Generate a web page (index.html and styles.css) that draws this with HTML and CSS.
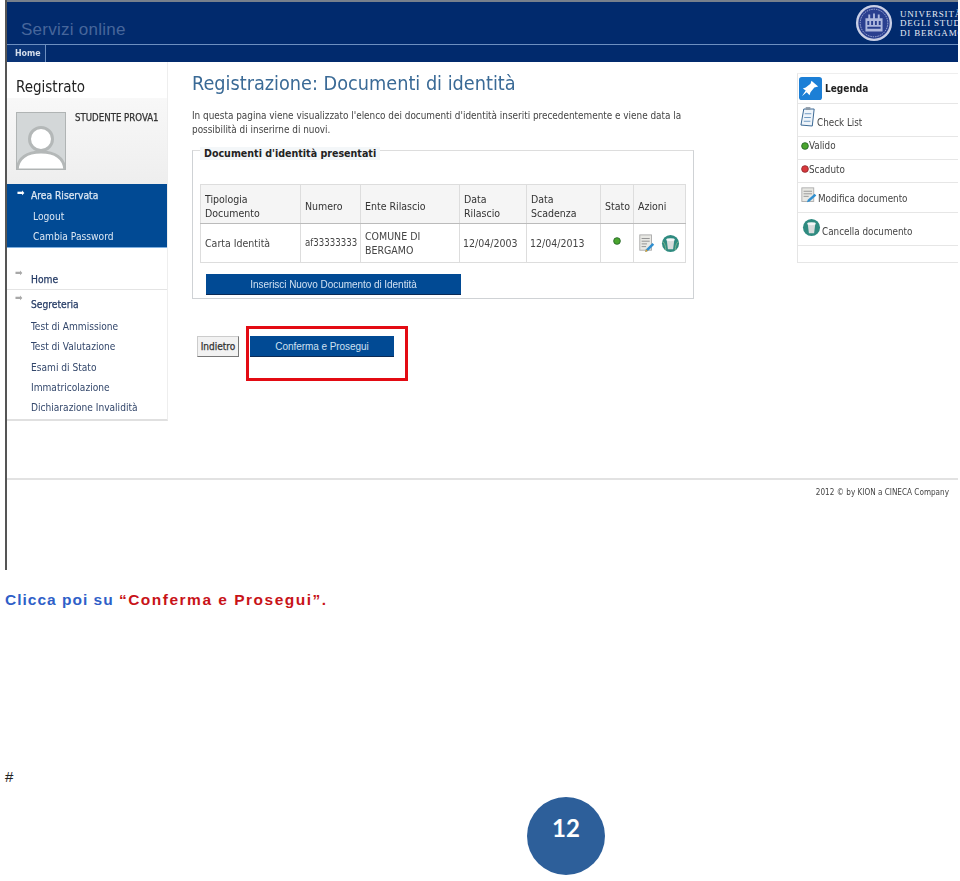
FILE: index.html
```html
<!DOCTYPE html>
<html lang="it">
<head>
<meta charset="utf-8">
<title>Registrazione: Documenti di identità</title>
<link rel="stylesheet" href="styles.css">
</head>
<body>
<div class="shot">
  <header class="head">
    <div class="brand-row">
      <div class="brand">Servizi online</div>
      <div class="uni">
        <svg class="seal" viewBox="0 0 40 40" width="38" height="38">
          <circle cx="20" cy="20" r="19" fill="#c9cfe6"/>
          <circle cx="20" cy="20" r="16.500" fill="#2a3f8f"/>
          <circle cx="20" cy="20" r="14.500" fill="none" stroke="#aab4dc" stroke-width="1" stroke-dasharray="1.500 1"/>
          <path d="M11 29V15h3v-4h2v4h3v-5h2v5h3v-4h2v4h3v14z" fill="#aeb8de"/>
          <path d="M13 18h2v4h-2zM17 18h2v4h-2zM21 18h2v4h-2zM25 18h2v4h-2zM13 24h14v2H13z" fill="#2a3f8f"/>
        </svg>
        <div class="uni-name">UNIVERSITÀ<br>DEGLI STUDI<br>DI BERGAMO</div>
      </div>
    </div>
    <nav class="topnav"><span class="topnav-item">Home</span></nav>
  </header>

  <div class="columns">
    <aside class="side">
      <h2 class="side-title">Registrato</h2>
      <div class="profile">
        <svg class="avatar" viewBox="0 0 50 58" width="50" height="58">
          <rect width="50" height="58" fill="#d3d7d8"/>
          <circle cx="25" cy="27" r="11.500" fill="#fff" stroke="#b4b8b8" stroke-width="3"/>
          <path d="M1 58c1-12 10-18 24-18s23 6 24 18z" fill="#fff" stroke="#b4b8b8" stroke-width="3"/>
          <rect x=".5" y=".5" width="49" height="57" fill="none" stroke="#b0b4b4"/>
        </svg>
        <div class="profile-name">STUDENTE PROVA1</div>
      </div>
      <ul class="menu-blue">
        <li class="menu-head"><span class="arrow">➡</span>Area Riservata</li>
        <li>Logout</li>
        <li>Cambia Password</li>
      </ul>
      <div class="menu-white">
        <div class="menu-group group-home"><span class="arrow">➡</span>Home</div>
        <div class="menu-group group-seg"><span class="arrow">➡</span>Segreteria</div>
        <ul class="sublist">
          <li>Test di Ammissione</li>
          <li>Test di Valutazione</li>
          <li>Esami di Stato</li>
          <li>Immatricolazione</li>
          <li>Dichiarazione Invalidità</li>
        </ul>
      </div>
    </aside>

    <main class="content">
      <h1 class="title">Registrazione: Documenti di identità</h1>
      <p class="intro">In questa pagina viene visualizzato l'elenco dei documenti d'identità inseriti precedentemente e viene data la<br>possibilità di inserirne di nuovi.</p>
      <section class="box">
        <h3 class="box-title">Documenti d'identità presentati</h3>
        <table class="docs">
          <colgroup>
            <col class="c1"><col class="c2"><col class="c3"><col class="c4"><col class="c5"><col class="c6"><col class="c7">
          </colgroup>
          <thead>
            <tr><th>Tipologia<br>Documento</th><th>Numero</th><th>Ente Rilascio</th><th>Data<br>Rilascio</th><th>Data<br>Scadenza</th><th>Stato</th><th>Azioni</th></tr>
          </thead>
          <tbody>
            <tr>
              <td>Carta Identità</td><td class="code">af33333333</td><td>COMUNE DI<br>BERGAMO</td><td class="date">12/04/2003</td><td class="date">12/04/2013</td>
              <td class="center"><svg class="dot" viewBox="0 0 10 10" width="8" height="8"><circle cx="5" cy="5" r="4.200" fill="#4aa52e" stroke="#1f5f25"/></svg></td>
              <td class="actions">
                <svg viewBox="0 0 20 20" width="18" height="18"><rect x="2" y="1" width="13" height="17" fill="#e8e8e4" stroke="#a9a9a9"/><path d="M4 5h9M4 8h9M4 11h6M4 14h5" stroke="#8b8b8b"/><path d="M9 17l7-7 2 2-7 7-3 1z" fill="#2f8fd0"/><path d="M8 20l1-3 2 2z" fill="#e8a020"/></svg>
                <svg viewBox="0 0 20 20" width="19" height="19"><circle cx="10" cy="10" r="9" fill="#2f8b80"/><path d="M6 6h8l-1.300 10H7.300z" fill="#d8dcdc"/><ellipse cx="10" cy="6" rx="4.500" ry="1.500" fill="#f4f6f6"/><path d="M2 8c2 2 3 5 3 9M18 8c-2 2-3 5-3 9" stroke="#7fb48a" fill="none"/></svg>
              </td>
            </tr>
          </tbody>
        </table>
        <button class="btn btn-insert" type="button">Inserisci Nuovo Documento di Identità</button>
      </section>
      <div class="actions-row">
        <button class="btn-back" type="button">Indietro</button>
        <button class="btn btn-confirm" type="button">Conferma e Prosegui</button>
        <div class="highlight"></div>
      </div>
    </main>

    <aside class="legend">
      <div class="leg-row leg-head">
        <svg viewBox="0 0 24 24" width="23" height="23"><rect width="24" height="24" rx="3" fill="#1c7fd6"/><path d="M13 4l7 6-4 1-4 5-1 3-3-3-5 4 4-6-3-2 3-1 5-4z" fill="#fff"/></svg>
        <span>Legenda</span>
      </div>
      <div class="leg-row leg-check">
        <svg viewBox="0 0 18 22" width="17" height="21"><path d="M4 2h11l-2 18-12-1z" fill="#eef4fa" stroke="#31618e"/><rect x="6" y="0" width="5" height="3" fill="#8c9aa8"/><path d="M5 7h7M4.500 11h7M4 15h7" stroke="#6a96bf"/></svg>
        <span>Check List</span>
      </div>
      <div class="leg-row leg-status leg-valid">
        <svg viewBox="0 0 10 10" width="8" height="8"><circle cx="5" cy="5" r="4.200" fill="#4aa52e" stroke="#1f5f25"/></svg><span>Valido</span>
      </div>
      <div class="leg-row leg-status leg-expired">
        <svg viewBox="0 0 10 10" width="8" height="8"><circle cx="5" cy="5" r="4.200" fill="#d8383c" stroke="#8a2428"/></svg><span>Scaduto</span>
      </div>
      <div class="leg-row leg-edit">
        <svg viewBox="0 0 20 20" width="17" height="17"><rect x="1" y="1" width="14" height="16" fill="#e8e8e4" stroke="#a9a9a9"/><path d="M3 5h10M3 8h10M3 11h6" stroke="#8b8b8b"/><path d="M8 15l8-7 2 2-8 7-3 1z" fill="#2f8fd0"/></svg>
        <span>Modifica documento</span>
      </div>
      <div class="leg-row leg-trash">
        <svg viewBox="0 0 20 20" width="19" height="19"><circle cx="10" cy="10" r="9" fill="#2f8b80"/><path d="M6 6h8l-1.300 10H7.300z" fill="#d8dcdc"/><ellipse cx="10" cy="6" rx="4.500" ry="1.500" fill="#f4f6f6"/></svg>
        <span>Cancella documento</span>
      </div>
      <div class="leg-row leg-empty"></div>
    </aside>
  </div>

  <footer class="foot">2012 © by KION a CINECA Company</footer>
</div>

<p class="caption"><span class="cap-blue">Clicca poi su </span><span class="cap-red">“Conferma e Prosegui”.</span></p>
<div class="hash">#</div>
<div class="page-no"><span>12</span></div>
</body>
</html>
```

FILE: styles.css
```css
* { box-sizing: border-box; }
html, body { margin: 0; padding: 0; }
body {
  width: 960px;
  height: 881px;
  overflow: hidden;
  background: #fff;
  font-family: "DejaVu Sans Condensed", "DejaVu Sans", sans-serif;
  font-stretch: condensed;
  color: #333;
}
ul { list-style: none; margin: 0; padding: 0; }
h1, h2, h3, p { margin: 0; font-weight: normal; }

.shot {
  margin-left: 5px;
  width: 953px;
  height: 570px;
  border-left: 2px solid #555;
  overflow: hidden;
  filter: blur(.3px);
}

/* header */
.head { border-top: 2px solid #77808c; background: #012a6d; }
.brand-row {
  height: 43px;
  display: flex;
  justify-content: space-between;
  align-items: center;
  border-bottom: 1px solid #6d8fc0;
  padding-left: 14px;
}
.brand {
  font: 17px "Liberation Sans", sans-serif;
  letter-spacing: .25px;
  color: #47669b;
  padding-top: 13px;
}
.uni { display: flex; align-items: center; gap: 7px; width: 103px; overflow: hidden; flex: none; white-space: nowrap; }
.seal { flex: none; }
.uni-name {
  font: 9px/9.500px "Liberation Serif", serif;
  letter-spacing: .8px;
  color: #e8ecf5;
  padding-top: 2px;
}
.topnav { height: 17px; display: flex; }
.topnav-item {
  width: 39px;
  font-size: 8.800px;
  font-weight: bold;
  line-height: 17px;
  padding-left: 8px;
  color: #d5deec;
  background: #0a3477;
  border-right: 1px solid #6d8fc0;
}

/* columns */
.columns { display: flex; height: 416px; align-items: flex-start; }

.side {
  width: 161px;
  flex: none;
  border-right: 1px solid #eee;
  border-bottom: 2px solid #e0e0e0;
}
.side-title { font-size: 15px; color: #222; height: 36px; padding: 16px 0 0 9px; line-height: 18px; }
.profile {
  height: 86px;
  background: linear-gradient(#f8f8f8, #eeeeee);
  padding: 14px 0 0 9px;
  display: flex;
  gap: 9px;
}
.avatar { flex: none; }
.profile-name { font-size: 9.600px; -webkit-text-stroke: .25px #333; color: #333; line-height: 12px; white-space: nowrap; }
.menu-blue {
  background: #014a94;
  color: #dce7f3;
  height: 64px;
  font-size: 10.200px;
  border-bottom: 1px solid #7fb0e0;
  padding: 2px 0 0 26px;
}
.menu-blue li { height: 20.700px; line-height: 20px; }
.menu-head { -webkit-text-stroke: .25px #dce7f3; position: relative; margin-left: -2px; }
.arrow { position: absolute; font-size: 10px; line-height: 10px; -webkit-text-stroke: 0; }
.menu-head .arrow { left: -14px; top: 2px; color: #fff; }
.menu-white { background: #fff; color: #33476b; }
.menu-group { position: relative; font-size: 10.200px; -webkit-text-stroke: .25px #263c66; padding-left: 24px; color: #263c66; }
.menu-group .arrow { left: 8px; color: #a8a8a8; top: 0; }
.group-home { height: 42px; padding-top: 24px; line-height: 16px; border-bottom: 1px solid #e4e4e4; }
.group-home .arrow { top: 20px; }
.group-seg { height: 24px; padding-top: 7px; line-height: 16px; }
.group-seg .arrow { top: 3px; }
.sublist { font-size: 10.100px; padding: 3px 0 1px 24px; }
.sublist li { height: 20.300px; line-height: 20px; white-space: nowrap; }

/* content */
.content { width: 502px; margin-left: 24px; flex: none; position: relative; }
.title { font-size: 19.700px; line-height: 24px; color: #3a6a96; padding-top: 10px; height: 42px; white-space: nowrap; }
.intro { font-size: 9.900px; line-height: 14px; color: #444; margin-top: 5px; white-space: nowrap; }
.box {
  margin-top: 13px;
  height: 149px;
  border: 1px solid #cfd2d5;
  border-top-color: #ddd;
  padding: 33px 7px 0;
  position: relative;
}
.box-title {
  position: absolute;
  left: 7px;
  top: -4px;
  padding: 0 4px;
  background: #f4f7f9;
  font-size: 10.600px;
  font-weight: bold;
  line-height: 13px;
  color: #222;
  white-space: nowrap;
}
.docs {
  table-layout: fixed;
  border-collapse: collapse;
  width: 485px;
  font-size: 10.500px;
  color: #444;
  border: 1px solid #9b9b9b;
  margin-bottom: 11px;
}
.c1 { width: 100px; } .c2 { width: 60px; } .c3 { width: 99px; } .c4 { width: 67px; }
.c5 { width: 74px; } .c6 { width: 33px; } .c7 { width: 52px; }
.docs th, .docs td {
  border: 1px solid #ddd;
  text-align: left;
  padding: 0 4px;
  line-height: 14px;
  font-weight: normal;
  white-space: nowrap;
}
.docs th { height: 39px; padding-top: 4px; background: #f5f5f5; color: #333; border-bottom-color: #bbb; }
.docs td { height: 39px; }
.docs .code { font-size: 9.600px; }
.docs .date { padding-left: 3px; }
.docs .center { text-align: center; }
.docs .dot { vertical-align: 2px; }
.docs .actions { padding-left: 4px; }
.docs .actions svg { vertical-align: middle; margin-right: 2px; }
.btn {
  display: block;
  font: 10px "Liberation Sans", sans-serif;
  letter-spacing: -.05px;
  color: #cfe0f2;
  background: #014a94;
  border: 0;
  border-bottom: 1px solid #0b2a55;
  padding: 0;
  height: 21px;
}
.btn-insert { width: 255px; margin-left: 6px; }

.actions-row { position: relative; display: flex; gap: 11px; margin: 37px 0 0 5px; align-items: flex-start; }
.btn-back {
  width: 42px;
  height: 21px;
  padding: 0;
  background: #f2f2f2;
  border: 1px solid #ccc;
  border-right-color: #777;
  border-bottom-color: #777;
  font-family: "DejaVu Sans Condensed", "DejaVu Sans", sans-serif;
  font-stretch: condensed;
  font-size: 10px;
  -webkit-text-stroke: .25px #333;
  color: #333;
}
.btn-confirm { width: 144px; }
.highlight {
  position: absolute;
  left: 49px;
  top: -10px;
  width: 162px;
  height: 55px;
  border: 3px solid #e30b13;
}

/* legend */
.legend {
  width: 161px;
  margin-left: 103px;
  margin-top: 11px;
  flex: none;
  border-left: 1px solid #e5e5e5;
  border-top: 1px solid #eee;
  font-size: 9.800px;
  color: #444;
}
.leg-row { border-bottom: 1px solid #e6e6e6; display: flex; align-items: center; white-space: nowrap; padding-left: 3px; }
.leg-head { height: 30px; font-weight: bold; font-size: 10px; gap: 3px; color: #222; padding-left: 1px; }
.leg-check { height: 33px; align-items: flex-end; padding-bottom: 8px; padding-left: 2px; }
.leg-status { height: 23px; }
.leg-valid { padding-bottom: 5px; }
.leg-expired { padding-bottom: 4px; }
.leg-edit { height: 30px; align-items: flex-end; padding-bottom: 8px; }
.leg-trash { height: 33px; align-items: flex-end; padding-bottom: 8px; padding-left: 4px; gap: 1px; }
.leg-empty { height: 17px; }

/* footer */
.foot {
  border-top: 2px solid #e2e2e2;
  height: 30px;
  padding: 5px 9px 0 0;
  text-align: right;
  font-size: 8.100px;
  line-height: 14px;
  color: #444;
}

/* below the screenshot */
.caption {
  margin: 21px 0 0 5px;
  font: bold 15.500px/18px "Liberation Sans", sans-serif;
  white-space: nowrap;
}
.cap-blue { color: #2f5fc8; letter-spacing: 1px; }
.cap-red { color: #c81318; letter-spacing: 1.500px; }
.hash {
  margin: 159px 0 0 5px;
  font: 15px/18px "Liberation Sans", sans-serif;
  color: #222;
}
.page-no {
  margin: 11px 0 0 527px;
  width: 78px;
  height: 78px;
  border-radius: 50%;
  background: #2d5f9a;
  color: #fff;
  font: bold 24px/62px Lato, sans-serif;
  text-align: center;
}
```
